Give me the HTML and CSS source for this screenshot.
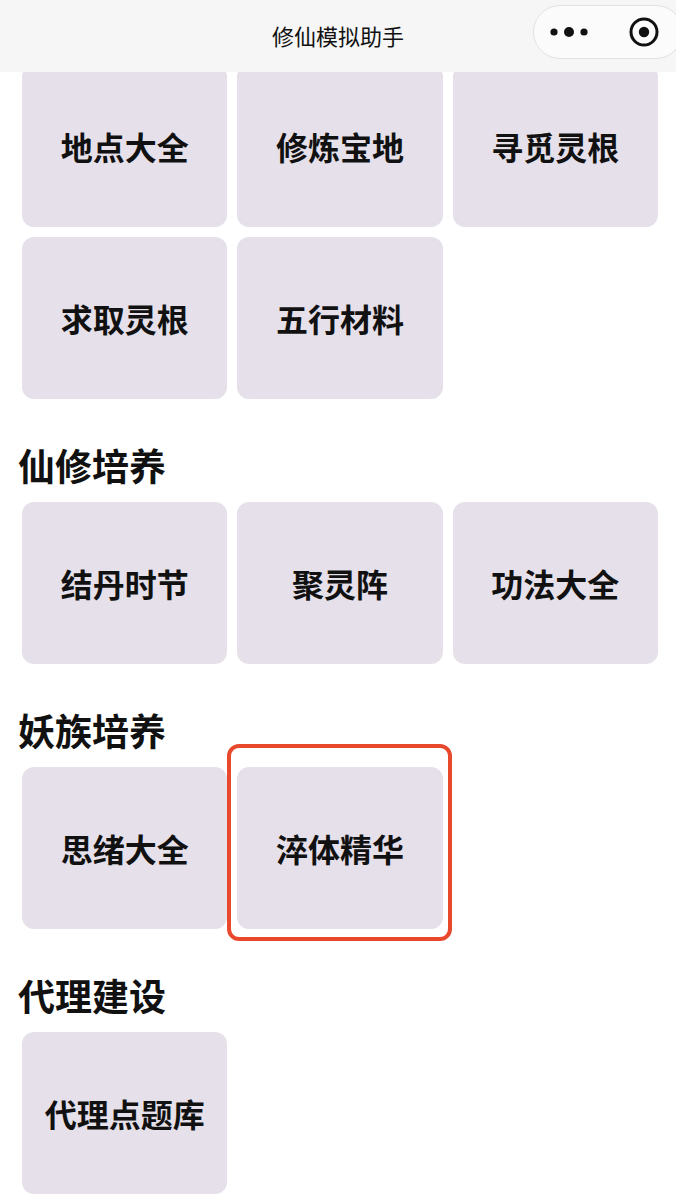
FILE: index.html
```html
<!DOCTYPE html>
<html lang="zh-CN">
<head>
  <meta charset="UTF-8" />
  <meta name="viewport" content="width=device-width, initial-scale=1.0"/>
  <title>修仙模拟助手</title>
  <link rel="stylesheet" href="styles.css">
</head>
<body>
  <header class="navbar">
    <div class="nav-title">修仙模拟助手</div>
    <div class="capsule">
      <svg class="capsule-more" width="44" height="14" viewBox="0 0 44 14">
        <circle cx="7" cy="7" r="3.6" fill="#111"/>
        <circle cx="22" cy="7" r="5" fill="#111"/>
        <circle cx="37" cy="7" r="3.6" fill="#111"/>
      </svg>
      <svg class="capsule-close" width="32" height="32" viewBox="0 0 32 32">
        <circle cx="16" cy="16" r="13" fill="none" stroke="#111" stroke-width="3"/>
        <circle cx="16" cy="16" r="5.2" fill="#111"/>
      </svg>
    </div>
  </header>

  <main class="page">
    <section class="section">
      <div class="grid">
        <div class="card">地点大全</div>
        <div class="card">修炼宝地</div>
        <div class="card">寻觅灵根</div>
        <div class="card">求取灵根</div>
        <div class="card">五行材料</div>
      </div>
    </section>

    <section class="section">
      <h2 class="section-title">仙修培养</h2>
      <div class="grid">
        <div class="card">结丹时节</div>
        <div class="card">聚灵阵</div>
        <div class="card">功法大全</div>
      </div>
    </section>

    <section class="section">
      <h2 class="section-title">妖族培养</h2>
      <div class="grid">
        <div class="card">思绪大全</div>
        <div class="card card-marked">淬体精华<span class="mark"></span></div>
      </div>
    </section>

    <section class="section">
      <h2 class="section-title">代理建设</h2>
      <div class="grid">
        <div class="card">代理点题库</div>
      </div>
    </section>
  </main>
</body>
</html>
```

FILE: styles.css
```css
* {
  margin: 0;
  padding: 0;
  box-sizing: border-box;
}

body {
  background: #fff;
  color: #111;
  font-family: "Noto Sans CJK SC", "Noto Sans", sans-serif;
}

.navbar {
  position: fixed;
  top: 0;
  left: 0;
  right: 0;
  height: 72px;
  background: #f6f6f6;
  display: flex;
  align-items: center;
  justify-content: center;
  z-index: 10;
}

.nav-title {
  font-size: 22px;
  color: #111;
  margin-top: -2px;
}

.capsule {
  position: absolute;
  top: 5px;
  left: 533px;
  width: 150px;
  height: 54px;
  border: 1.5px solid #e2e2e2;
  border-radius: 27px;
  background: #fbfbfb;
  display: flex;
  align-items: center;
}

.capsule-more {
  margin-left: 13px;
}

.capsule-close {
  margin-left: 37px;
}

.page {
  padding-top: 65px;
  padding-bottom: 20px;
}

.section-title {
  font-size: 37px;
  line-height: 44px;
  font-weight: 700;
  padding-left: 18px;
  margin-top: 44px;
  margin-bottom: 15px;
}

.grid {
  display: grid;
  grid-template-columns: repeat(3, 1fr);
  grid-auto-rows: 162px;
  gap: 10px;
  padding: 0 18px 0 22px;
}

.card {
  background: #e5e0ea;
  border-radius: 12px;
  display: flex;
  align-items: center;
  justify-content: center;
  font-size: 32px;
  font-weight: 700;
  color: #111;
}

.card-marked {
  position: relative;
}

.mark {
  position: absolute;
  top: -23px;
  left: -10px;
  right: -9px;
  bottom: -12px;
  border: 4px solid #e8482c;
  border-radius: 12px;
}
```
